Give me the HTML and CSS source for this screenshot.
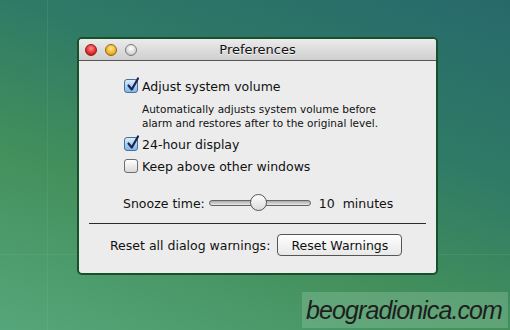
FILE: index.html
```html
<!DOCTYPE html>
<html lang="en">

<head>
  <meta charset="UTF-8">
  <title>Preferences</title>
  <link rel="stylesheet" href="styles.css">
</head>

<body>
  <div class="desktop">
    <div class="window">
      <div class="titlebar">
        <div class="lights">
          <span class="light red"></span>
          <span class="light yellow"></span>
          <span class="light grey"></span>
        </div>
        <div class="title">Preferences</div>
      </div>

      <div class="content">
        <div class="options">
          <label class="option">
            <span class="box checked">
              <svg viewBox="0 0 16 16" width="16" height="16"><path d="M3.5 8.5 L6.8 12.5 L13 1.5" fill="none" stroke="#1a2650" stroke-width="2.2" stroke-linecap="round" stroke-linejoin="round"/></svg>
            </span>
            <span class="label">Adjust system volume</span>
          </label>
          <p class="hint">Automatically adjusts system volume before<br>alarm and restores after to the original level.</p>
          <label class="option">
            <span class="box checked">
              <svg viewBox="0 0 16 16" width="16" height="16"><path d="M3.5 8.5 L6.8 12.5 L13 1.5" fill="none" stroke="#1a2650" stroke-width="2.2" stroke-linecap="round" stroke-linejoin="round"/></svg>
            </span>
            <span class="label">24-hour display</span>
          </label>
          <label class="option">
            <span class="box"></span>
            <span class="label">Keep above other windows</span>
          </label>
        </div>

        <div class="snooze">
          <span>Snooze time:</span>
          <div class="slider">
            <div class="track"></div>
            <div class="knob"></div>
          </div>
          <span class="value">10&nbsp; minutes</span>
        </div>

        <hr class="divider">

        <div class="reset">
          <span>Reset all dialog warnings:</span>
          <button type="button">Reset Warnings</button>
        </div>
      </div>
    </div>

    <div class="watermark">beogradionica.com</div>
  </div>
</body>

</html>
```

FILE: styles.css
```css
body {
  margin: 0;
  font-family: "DejaVu Sans", Verdana, sans-serif;
}

.desktop {
  position: relative;
  width: 510px;
  height: 330px;
  overflow: hidden;
  background:
    linear-gradient(90deg, transparent 47px, rgba(120, 220, 170, 0.12) 47px, rgba(120, 220, 170, 0.12) 48px, transparent 48px),
    linear-gradient(0deg, transparent 75px, rgba(150, 210, 110, 0.12) 75px, rgba(150, 210, 110, 0.12) 76px, transparent 76px),
    linear-gradient(200deg, #27696b 0%, #2f7a66 35%, #43905c 65%, #56a67b 100%);
  padding-top: 37px;
  box-sizing: border-box;
}

.window {
  margin-left: 77px;
  width: 361px;
  height: 238px;
  box-sizing: border-box;
  border: 2px solid #17502a;
  border-radius: 5px;
  background: #ececec;
  overflow: hidden;
}

.titlebar {
  position: relative;
  height: 21px;
  background: linear-gradient(#ebebeb, #cfcfcf);
  border-bottom: 1px solid #555;
  display: flex;
  align-items: center;
}

.lights {
  display: flex;
  gap: 8px;
  padding-left: 6px;
}

.light {
  width: 12px;
  height: 12px;
  border-radius: 50%;
  box-sizing: border-box;
  border: 1px solid #6b6b6b;
}

.light.red {
  background: radial-gradient(circle at 50% 35%, #ff8d8d, #e3282a 60%, #a50f10);
  border-color: #8e1a1a;
}

.light.yellow {
  background: radial-gradient(circle at 50% 35%, #ffe69a, #f3b21f 60%, #b57c00);
  border-color: #8d6a12;
}

.light.grey {
  background: radial-gradient(circle at 50% 35%, #fff, #d8d8d8 60%, #a8a8a8);
  border-color: #7a7a7a;
}

.title {
  position: absolute;
  left: 0;
  right: 0;
  text-align: center;
  font-size: 13px;
  color: #111;
  text-shadow: 0 1px 0 rgba(255, 255, 255, 0.7);
}

.content {
  padding: 17px 0 0;
  color: #111;
}

.options {
  padding-left: 45px;
}

.option {
  display: flex;
  align-items: center;
  gap: 4px;
  font-size: 12.5px;
  height: 16px;
  margin-bottom: 6px;
}

.box {
  width: 14px;
  height: 14px;
  box-sizing: border-box;
  border: 1px solid #6d6d6d;
  border-radius: 3px;
  background: linear-gradient(#ffffff, #d9d9d9);
  position: relative;
}

.box.checked {
  background: linear-gradient(#d9ecfb, #7fb7ea);
  border-color: #4c6f97;
}

.box svg {
  position: absolute;
  left: 0;
  top: -3px;
}

.hint {
  margin: 8px 0 6px 18px;
  font-size: 10.5px;
  line-height: 14px;
}

.snooze {
  display: flex;
  align-items: center;
  padding-left: 44px;
  margin-top: 20px;
  font-size: 12.5px;
  height: 18px;
}

.slider {
  position: relative;
  width: 102px;
  height: 18px;
  margin: 0 8px 0 4px;
}

.track {
  position: absolute;
  left: 0;
  right: 0;
  top: 6px;
  height: 4px;
  border: 1px solid #666;
  border-radius: 3px;
  background: linear-gradient(#aaa, #e8e8e8);
}

.knob {
  position: absolute;
  left: 41px;
  top: 0;
  width: 17px;
  height: 17px;
  box-sizing: border-box;
  border-radius: 50%;
  border: 1px solid #555;
  background: linear-gradient(#fdfdfd, #dcdcdc);
}

.divider {
  margin: 11px 10px 0 10px;
  border: 0;
  border-top: 1px solid #2a2a2a;
}

.reset {
  display: flex;
  align-items: center;
  padding-left: 31px;
  margin-top: 10px;
  font-size: 12.5px;
  gap: 7px;
}

.reset button {
  width: 125px;
  height: 22px;
  font-family: inherit;
  font-size: 12.5px;
  color: #111;
  border: 1px solid #555;
  border-radius: 4px;
  background: linear-gradient(#ffffff, #e8e8e8);
  padding: 0;
}

.watermark {
  position: absolute;
  left: 302px;
  top: 292px;
  width: 206px;
  height: 36px;
  background: rgba(150, 200, 170, 0.35);
  font-family: "Liberation Sans", Arial, sans-serif;
  font-style: italic;
  font-size: 25px;
  letter-spacing: -0.9px;
  line-height: 36px;
  color: #1e1e1e;
  text-align: right;
  padding-right: 6px;
  box-sizing: border-box;
  white-space: nowrap;
}
```
